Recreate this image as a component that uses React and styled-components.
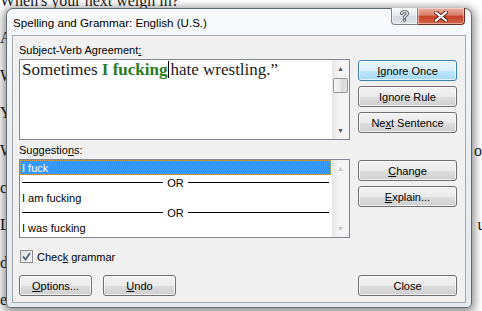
import React from 'react';
import styled, { createGlobalStyle } from 'styled-components';

const GlobalStyle = createGlobalStyle`
  html, body {
    margin: 0;
    padding: 0;
    background: #ffffff;
    overflow: hidden;
  }
  body {
    width: 482px;
    height: 311px;
    position: relative;
    font-family: "Liberation Sans", Arial, sans-serif;
  }
`;

const Page = styled.div`
  margin-top: -18px;
  width: 490px;
  font-family: "Liberation Serif", "DejaVu Serif", serif;
  font-size: 16px;
  color: #1c1c1c;
`;

const DocLine = styled.div`
  height: 37.4px;
  line-height: 37.4px;
  display: flex;
  justify-content: space-between;
  white-space: nowrap;
`;

const Dialog = styled.div`
  position: absolute;
  left: 6px;
  top: 8px;
  width: 466px;
  height: 300px;
  box-sizing: border-box;
  border: 1px solid rgba(50, 60, 70, 0.75);
  border-radius: 7px 7px 5px 5px;
  background: linear-gradient(#f8fafc, #eaeff4 40%, #e4e9ef);
  box-shadow: 0 2px 9px 3px rgba(0, 0, 0, 0.42);
  display: flex;
  flex-direction: column;
`;

const TitleBar = styled.div`
  height: 27px;
  display: flex;
  align-items: flex-start;
  padding: 0 6px 0 6px;
`;

const Title = styled.div`
  flex: 1;
  padding-top: 7px;
  font-size: 11.6px;
  color: #000;
`;

const CaptionGroup = styled.div`
  display: flex;
  height: 17px;
  margin-top: -1px;
`;

const CaptionButton = styled.div`
  width: ${(p) => p.$w}px;
  height: 17px;
  box-sizing: border-box;
  display: flex;
  align-items: center;
  justify-content: center;
  border: 1px solid ${(p) => (p.$close ? '#6e2a1d' : '#79828e')};
  border-top: none;
  border-left: ${(p) => (p.$close ? 'none' : '1px solid #79828e')};
  border-radius: ${(p) => (p.$close ? '0 0 4px 0' : '0 0 0 4px')};
  background: ${(p) =>
    p.$close
      ? 'linear-gradient(#eab0a3, #dc7b66 45%, #c7432a 52%, #d4654a)'
      : 'linear-gradient(#f7f9fb, #e4e8ed 48%, #d2d8df 52%, #e3e7ec)'};
  box-shadow: inset 0 0 0 1px rgba(255, 255, 255, 0.45);
`;

const Client = styled.div`
  flex: 1;
  margin: 0 5px 4px 5px;
  border: 1px solid #a3a9b0;
  background: #f0f0f0;
  padding: 8px 8px 6px 6px;
  display: flex;
  flex-direction: column;
  font-size: 11px;
  color: #000;
`;

const Section = styled.div`
  display: flex;
  gap: 8px;
  margin-top: ${(p) => p.$top || 0}px;
`;

const LeftCol = styled.div`
  width: 331px;
  display: flex;
  flex-direction: column;
`;

const RightCol = styled.div`
  width: 99px;
  padding-top: 16px;
  display: flex;
  flex-direction: column;
  gap: 5px;
`;

const Label = styled.div`
  height: 15px;
  line-height: 13px;
`;

const Box = styled.div`
  height: ${(p) => p.$h}px;
  box-sizing: border-box;
  border: 1px solid #828790;
  background: #fff;
  display: flex;
`;

const BoxBody = styled.div`
  flex: 1;
  overflow: hidden;
`;

const Sentence = styled.div`
  font-family: "Liberation Serif", "DejaVu Serif", serif;
  font-size: 17px;
  line-height: 19px;
  padding: 0 0 0 2px;
  white-space: nowrap;
  color: #1a1a1a;
`;

const Flag = styled.span`
  color: #2a7d22;
  font-weight: bold;
`;

const Caret = styled.span`
  display: inline-block;
  width: 1px;
  height: 17px;
  background: #000;
  vertical-align: -3px;
  margin: 0 1px 0 1px;
`;

const ScrollBar = styled.div`
  width: 17px;
  display: flex;
  flex-direction: column;
  background: linear-gradient(90deg, #e6e6e6, #f4f4f4 40%, #f4f4f4);
`;

const Arrow = styled.div`
  height: 17px;
  display: flex;
  align-items: center;
  justify-content: center;
  color: ${(p) => (p.$off ? '#c4c4c4' : '#555')};
  font-size: 7px;
`;

const Thumb = styled.div`
  height: 15px;
  margin: 1px 1px 0 1px;
  box-sizing: border-box;
  border: 1px solid #979797;
  border-radius: 2px;
  background: linear-gradient(90deg, #f3f3f3, #e7e7e7 50%, #d7d7d7 51%, #e1e1e1);
`;

const Track = styled.div`
  flex: 1;
`;

const Row = styled.div`
  height: 15px;
  line-height: 14px;
  box-sizing: border-box;
  white-space: nowrap;
  color: ${(p) => (p.$sel ? '#fff' : '#000')};
  background: ${(p) => (p.$sel ? '#3399ff' : 'transparent')};
  border: ${(p) => (p.$sel ? '1px dotted #e0a040' : 'none')};
  margin: ${(p) => (p.$sel ? '0 1px 0 0' : '0')};
  padding-left: ${(p) => (p.$sel ? 1 : 2)}px;
  padding-top: ${(p) => (p.$sel ? 0 : 1)}px;
`;

const OrRow = styled.div`
  height: 15px;
  display: flex;
  align-items: center;
  padding: 0 3px 0 2px;
`;

const OrLine = styled.div`
  flex: 1;
  height: 1px;
  background: #000;
`;

const OrText = styled.span`
  padding: 0 4px;
  line-height: 14px;
`;

const Button = styled.div`
  width: ${(p) => p.$w || 99}px;
  height: 21px;
  box-sizing: border-box;
  border: 1px solid ${(p) => (p.$hot ? '#3c7fb1' : '#707070')};
  border-radius: 3px;
  background: ${(p) =>
    p.$hot
      ? 'linear-gradient(#eaf6fd, #d9f0fc 50%, #bee6fd 51%, #a7d9f5)'
      : 'linear-gradient(#f2f2f2, #ebebeb 50%, #dddddd 51%, #cfcfcf)'};
  box-shadow: inset 0 0 0 1px rgba(255, 255, 255, 0.7);
  display: flex;
  align-items: center;
  justify-content: center;
  font-size: 11px;
  line-height: 14px;
`;

const Key = styled.span`
  text-decoration: underline;
`;

const CheckRow = styled.div`
  margin-top: 12px;
  height: 13px;
  display: flex;
  align-items: center;
  gap: 4px;
  padding-left: 1px;
`;

const CheckBox = styled.div`
  width: 13px;
  height: 13px;
  box-sizing: border-box;
  border: 1px solid #8e8f8f;
  background: linear-gradient(135deg, #dcdcdc, #fbfbfb);
  display: flex;
  align-items: center;
  justify-content: center;
`;

const BottomRow = styled.div`
  margin-top: 12px;
  display: flex;
  gap: 11px;
`;

const Spacer = styled.div`
  flex: 1;
`;

export default function App() {
  return (
    <>
      <GlobalStyle />
      <Page>
        <DocLine><span>When's your next weigh in?</span></DocLine>
        <DocLine><span>Are you ready?</span></DocLine>
        <DocLine><span>What did he say?</span></DocLine>
        <DocLine><span>Yes, I did.</span></DocLine>
        <DocLine><span>Well, you</span><span>ou</span></DocLine>
        <DocLine><span>come on</span></DocLine>
        <DocLine><span>Like I said</span><span>ul</span></DocLine>
        <DocLine><span>do it</span></DocLine>
        <DocLine><span>else</span></DocLine>
      </Page>
      <Dialog>
        <TitleBar>
          <Title>Spelling and Grammar: English (U.S.)</Title>
          <CaptionGroup>
            <CaptionButton $w={27}>
              <svg width="9" height="12" viewBox="0 0 9 12">
                <path d="M1.5 3.5 C1.5 1 7.5 1 7.5 3.5 C7.5 5.5 4.5 5.5 4.5 7.5" fill="none" stroke="#4a4f57" strokeWidth="3" strokeLinecap="round" />
                <path d="M1.5 3.5 C1.5 1 7.5 1 7.5 3.5 C7.5 5.5 4.5 5.5 4.5 7.5" fill="none" stroke="#f4f4f4" strokeWidth="1.4" strokeLinecap="round" />
                <circle cx="4.5" cy="10.2" r="1.6" fill="#4a4f57" />
                <circle cx="4.5" cy="10.2" r="0.8" fill="#f4f4f4" />
              </svg>
            </CaptionButton>
            <CaptionButton $w={47} $close>
              <svg width="14" height="11" viewBox="0 0 14 11">
                <path d="M2 1.5 L12 9.5 M12 1.5 L2 9.5" stroke="#5a1d12" strokeWidth="4" strokeLinecap="square" />
                <path d="M2 1.5 L12 9.5 M12 1.5 L2 9.5" stroke="#ffffff" strokeWidth="2.2" strokeLinecap="square" />
              </svg>
            </CaptionButton>
          </CaptionGroup>
        </TitleBar>
        <Client>
          <Section>
            <LeftCol>
              <Label>Subject-Verb Agreement<Key>:</Key></Label>
              <Box $h={81}>
                <BoxBody>
                  <Sentence>
                    Sometimes <Flag>I fucking</Flag><Caret />hate wrestling.”
                  </Sentence>
                </BoxBody>
                <ScrollBar>
                  <Arrow>▲</Arrow>
                  <Thumb />
                  <Track />
                  <Arrow>▼</Arrow>
                </ScrollBar>
              </Box>
            </LeftCol>
            <RightCol>
              <Button $hot><span><Key>I</Key>gnore Once</span></Button>
              <Button><span>I<Key>g</Key>nore Rule</span></Button>
              <Button><span>Ne<Key>x</Key>t Sentence</span></Button>
            </RightCol>
          </Section>
          <Section $top={4}>
            <LeftCol>
              <Label>Suggestio<Key>n</Key>s:</Label>
              <Box $h={79}>
                <BoxBody>
                  <Row $sel>I fuck</Row>
                  <OrRow><OrLine /><OrText>OR</OrText><OrLine /></OrRow>
                  <Row>I am fucking</Row>
                  <OrRow><OrLine /><OrText>OR</OrText><OrLine /></OrRow>
                  <Row>I was fucking</Row>
                </BoxBody>
                <ScrollBar>
                  <Arrow $off>▲</Arrow>
                  <Track />
                  <Arrow $off>▼</Arrow>
                </ScrollBar>
              </Box>
            </LeftCol>
            <RightCol>
              <Button><span><Key>C</Key>hange</span></Button>
              <Button><span><Key>E</Key>xplain...</span></Button>
            </RightCol>
          </Section>
          <CheckRow>
            <CheckBox>
              <svg width="9" height="9" viewBox="0 0 9 9">
                <path d="M1 4.5 L3.5 7.5 L8 1" fill="none" stroke="#4d6185" strokeWidth="1.8" />
              </svg>
            </CheckBox>
            <span>Chec<Key>k</Key> grammar</span>
          </CheckRow>
          <BottomRow>
            <Button $w={73}><span><Key>O</Key>ptions...</span></Button>
            <Button $w={73}><span><Key>U</Key>ndo</span></Button>
            <Spacer />
            <Button>Close</Button>
          </BottomRow>
        </Client>
      </Dialog>
    </>
  );
}
